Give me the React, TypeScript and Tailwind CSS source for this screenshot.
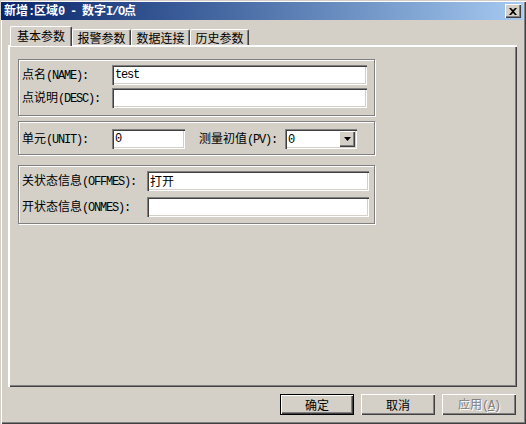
import React from "react";

// Win2000 style bevels
const raised = "shadow-[inset_1px_1px_0_#ffffff,inset_-1px_-1px_0_#404040,inset_-2px_-2px_0_#808080]";
const sunken =
  "shadow-[inset_1px_1px_0_#808080,inset_2px_2px_0_#404040,inset_-1px_-1px_0_#ffffff,inset_-2px_-2px_0_#d4d0c8]";

// ASCII runs get the narrow half-width look, CJK stays full width
function Mixed({ text, bold }: { text: string; bold?: boolean }) {
  const parts = text.split(/([\x20-\x7e]+)/).filter(Boolean);
  return (
    <>
      {parts.map((p, i) =>
        /^[\x20-\x7e]+$/.test(p) ? (
          <span
            key={i}
            className={`[font-family:'Liberation_Mono',monospace] text-[12px] tracking-[-1.2px] whitespace-pre ${
              bold ? "font-bold" : ""
            }`}
          >
            {p}
          </span>
        ) : (
          <span key={i}>{p}</span>
        )
      )}
    </>
  );
}

function Field({ value = "", className = "" }: { value?: string; className?: string }) {
  return (
    <div className={`h-[20px] bg-white ${sunken} flex items-center pl-[3px] text-black ${className}`}>
      <Mixed text={value} />
    </div>
  );
}

function Group({ children, className = "" }: { children: React.ReactNode; className?: string }) {
  return (
    <div
      className={`w-[357px] border border-[#808080] shadow-[1px_1px_0_#ffffff,inset_1px_1px_0_#ffffff] flex flex-col ${className}`}
    >
      {children}
    </div>
  );
}

function Tab({ label, active }: { label: string; active?: boolean }) {
  if (active) {
    return (
      <div className="relative z-10 h-[20px] w-[62px] bg-[#d4d0c8] border-l border-t border-white rounded-tl-[2px] shadow-[inset_-1px_0_0_#808080] border-r border-r-[#404040] rounded-tr-[2px] flex items-center justify-center pb-[1px]">
        {label}
      </div>
    );
  }
  return (
    <div className="h-[16px] mb-[1px] w-[59px] border-l border-t border-white rounded-tl-[2px] border-r border-r-[#404040] shadow-[inset_-1px_0_0_#808080] rounded-tr-[2px] flex items-center justify-center pt-[1px]">
      {label}
    </div>
  );
}

function Button({ label, isDefault, disabled }: { label: React.ReactNode; isDefault?: boolean; disabled?: boolean }) {
  return (
    <div
      className={`w-[74px] h-[21px] flex items-center justify-center bg-[#d4d0c8] ${
        isDefault ? "border border-black" : ""
      }`}
    >
      <div className={`w-full h-full flex items-center justify-center ${raised}`}>
        <span className={disabled ? "text-[#808080] [text-shadow:1px_1px_0_#ffffff]" : "text-black"}>{label}</span>
      </div>
    </div>
  );
}

export default function App() {
  return (
    <div className="w-[526px] h-[424px] bg-[#d4d0c8] relative text-[12px] leading-[14px] text-black [font-family:'Noto_Sans_CJK_SC','Noto_Sans',sans-serif] shadow-[inset_1px_1px_0_#d4d0c8,inset_2px_2px_0_#ffffff,inset_-1px_-1px_0_#404040,inset_-2px_-2px_0_#808080] flex flex-col overflow-hidden">
      {/* title bar */}
      <div className="mt-[2px] ml-[1px] mr-[3px] h-[18px] bg-gradient-to-r from-[#0a246a] to-[#a6caf0] flex items-center justify-between pl-[3px] pr-[2px]">
        <div className="text-white font-bold">
          <Mixed text="新增:区域0 - 数字I/O点" bold />
        </div>
        <div className={`w-[16px] h-[14px] bg-[#d4d0c8] ${raised} flex items-center justify-center`}>
          <svg width="8" height="7" viewBox="0 0 8 7">
            <path d="M0 0h2l2 2 2-2h2L5 3.5 8 7H6L4 5 2 7H0l3-3.5z" fill="#000" />
          </svg>
        </div>
      </div>

      {/* tabs */}
      <div className="mt-[6px] pl-[10px] flex items-end -mb-[1px]">
        <Tab label="基本参数" active />
        <Tab label="报警参数" />
        <Tab label="数据连接" />
        <Tab label="历史参数" />
      </div>

      {/* tab page */}
      <div className={`ml-[8px] w-[509px] h-[342px] ${raised} border-t border-l border-white pl-[9px] pt-[13px] flex flex-col gap-[5px]`}>
        <Group className="pt-[5px] pb-[7px] pr-[7px] gap-[3px]">
          <div className="flex items-center">
            <div className="w-[93px] pl-[3px]">
              <Mixed text="点名(NAME):" />
            </div>
            <Field value="test" className="flex-1" />
          </div>
          <div className="flex items-center">
            <div className="w-[93px] pl-[3px]">
              <Mixed text="点说明(DESC):" />
            </div>
            <Field className="flex-1" />
          </div>
        </Group>

        <Group className="pt-[7px] pb-[5px]">
          <div className="flex items-center">
            <div className="w-[93px] pl-[3px]">
              <Mixed text="单元(UNIT):" />
            </div>
            <Field value="0" className="w-[73px]" />
            <div className="w-[100px] pl-[14px]">
              <Mixed text="测量初值(PV):" />
            </div>
            <div className={`w-[72px] h-[20px] bg-white ${sunken} flex items-center pl-[3px] pr-[2px]`}>
              <span className="flex-1">
                <Mixed text="0" />
              </span>
              <div className={`w-[16px] h-[16px] bg-[#d4d0c8] ${raised} flex items-center justify-center`}>
                <svg width="7" height="4" viewBox="0 0 7 4">
                  <path d="M0 0h7L3.5 4z" fill="#000" />
                </svg>
              </div>
            </div>
          </div>
        </Group>

        <Group className="mt-[5px] pt-[5px] pb-[6px] pr-[5px] gap-[6px]">
          <div className="flex items-center">
            <div className="w-[128px] pl-[3px]">
              <Mixed text="关状态信息(OFFMES):" />
            </div>
            <Field value="打开" className="flex-1" />
          </div>
          <div className="flex items-center">
            <div className="w-[128px] pl-[3px]">
              <Mixed text="开状态信息(ONMES):" />
            </div>
            <Field className="flex-1" />
          </div>
        </Group>
      </div>

      {/* dialog buttons */}
      <div className="mt-[7px] pr-[10px] flex justify-end gap-[7px]">
        <Button label="确定" isDefault />
        <Button label="取消" />
        <Button
          disabled
          label={
            <>
              应用
              <span className="[font-family:'Liberation_Mono',monospace] text-[12px] tracking-[-1.2px]">
                (<span className="underline">A</span>)
              </span>
            </>
          }
        />
      </div>
    </div>
  );
}
